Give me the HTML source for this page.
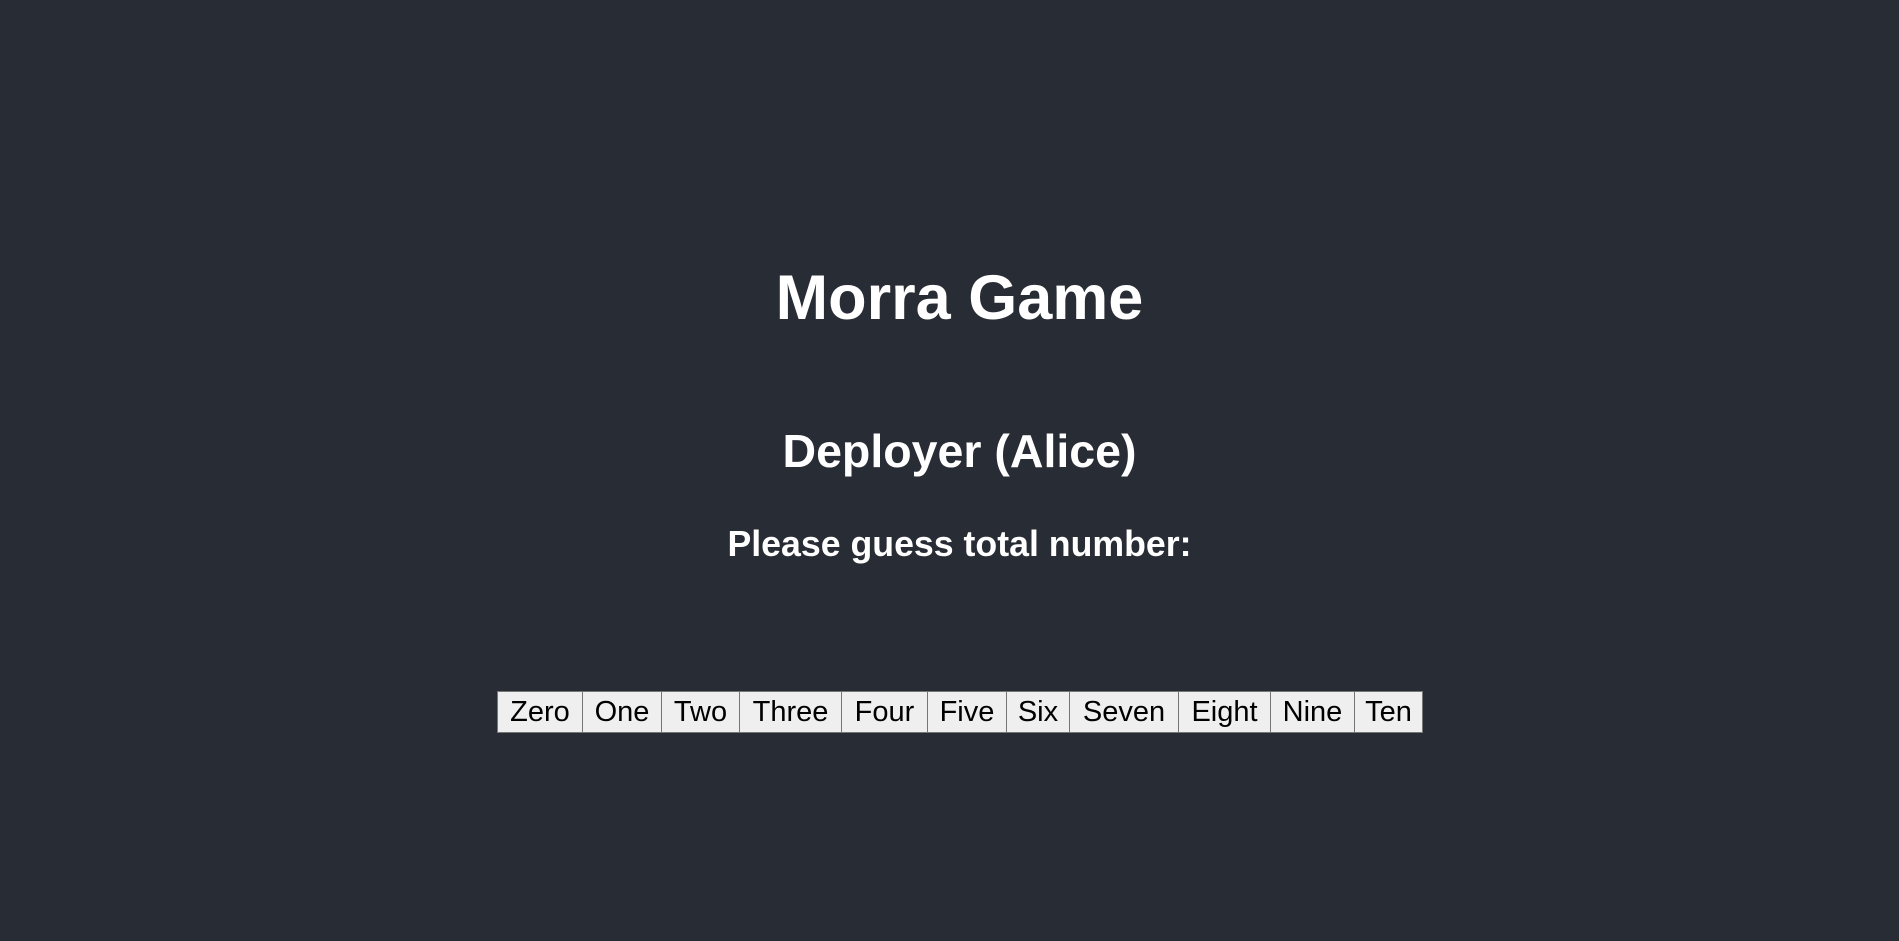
<!DOCTYPE html>
<html><head><style>
html,body{margin:0;padding:0;background:#282c34;width:1899px;height:941px;overflow:hidden;font-family:"Liberation Sans",sans-serif;color:#fff}
.t{position:absolute;left:20px;width:1879px;text-align:center;font-weight:bold;white-space:nowrap;line-height:1}
.bt{position:absolute;top:691px;left:497px;display:flex}
.bt div{height:40px;border:1px solid #767676;background:#efefef;color:#000;font-size:29px;display:flex;align-items:center;justify-content:center;box-sizing:content-box;margin-right:-1px}
</style></head><body>
<div class="t" style="top:267px;font-size:63px">Morra Game</div>
<div class="t" style="top:428px;font-size:46.5px">Deployer (Alice)</div>
<div class="t" style="top:527px;font-size:35.7px">Please guess total number:</div>
<div class="bt">
<div style="width:84px">Zero</div><div style="width:78px">One</div><div style="width:77px">Two</div><div style="width:101px">Three</div><div style="width:85px">Four</div><div style="width:78px">Five</div><div style="width:62px">Six</div><div style="width:108px">Seven</div><div style="width:91px">Eight</div><div style="width:83px">Nine</div><div style="width:67px">Ten</div>
</div>
</body></html>
